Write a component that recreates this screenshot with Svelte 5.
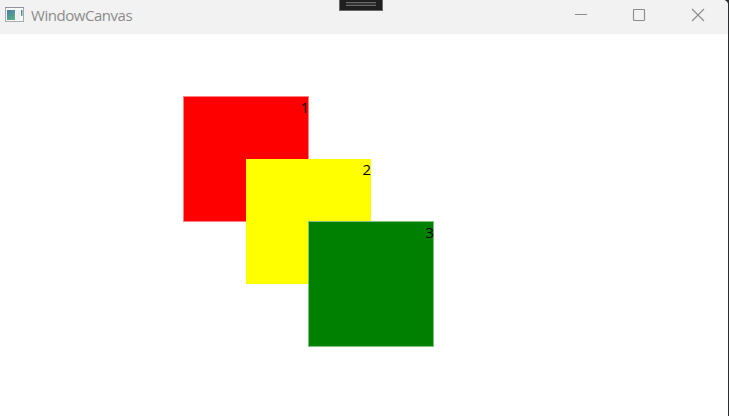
<script>
  const squares = [
    { label: '1', x: 183, y: 62, size: 126, fill: '#ff0000', edge: '#ff8080' },
    { label: '2', x: 246, y: 125, size: 125, fill: '#ffff00', edge: '#ffff00' },
    { label: '3', x: 308, y: 187, size: 126, fill: '#008000', edge: '#80c080' }
  ];
</script>

<div class="desktop">
  <div class="window">
    <header class="titlebar">
      <svg class="app-icon" width="20" height="16" viewBox="0 0 20 16">
        <defs>
          <linearGradient id="pane" x1="0" y1="0" x2="0.6" y2="1">
            <stop offset="0" stop-color="#4a7ca8" />
            <stop offset="1" stop-color="#56aa86" />
          </linearGradient>
        </defs>
        <rect x="0.5" y="0.5" width="18" height="14" fill="#f8f8f9" stroke="#a9abb0" />
        <path d="M0 .5H19" stroke="#8f939d" />
        <rect x="2" y="3" width="8" height="10" fill="url(#pane)" />
        <rect x="11" y="3" width="4" height="10" fill="#eeeff1" />
        <rect x="16" y="3" width="1.5" height="6" fill="url(#pane)" />
      </svg>
      <span class="title">WindowCanvas</span>
      <div class="controls">
        <svg width="14" height="14" viewBox="0 0 14 14"><path d="M2 6.5H14" stroke="#8c8c8c" /></svg>
        <svg width="14" height="14" viewBox="0 0 14 14"><rect x="1.5" y="1.5" width="11" height="11" rx="0.8" fill="none" stroke="#8c8c8c" stroke-width="1.15" /></svg>
        <svg width="14" height="14" viewBox="0 0 14 14"><path d="M1 1L13 13M13 1L1 13" stroke="#8c8c8c" stroke-width="1.1" /></svg>
      </div>
    </header>
    <main class="canvas">
      {#each squares as s}
        <div class="square" style="left:{s.x}px;top:{s.y}px;width:{s.size}px;height:{s.size}px;background:{s.fill};border-color:{s.edge}">
          <span class:raised={s.size === 125}>{s.label}</span>
        </div>
      {/each}
    </main>
  </div>
  <div class="debug-handle"><i></i></div>
</div>

<style>
  .desktop {
    position: relative;
    width: 729px;
    height: 416px;
    overflow: hidden;
    background: #2b2d2e;
    font-family: "Open Sans", "Noto Sans", sans-serif;
  }
  .window {
    display: flex;
    flex-direction: column;
    width: 728px;
    height: 416px;
    overflow: hidden;
    border-top-right-radius: 5px;
    background: #fff;
  }
  .titlebar {
    display: flex;
    align-items: flex-start;
    height: 34px;
    flex: none;
    background: #f2f2f2;
  }
  .app-icon {
    margin: 7px 0 0 5px;
    flex: none;
  }
  .title {
    margin: 5px 0 0 6px;
    font-size: 15px;
    line-height: 20px;
    letter-spacing: -0.46px;
    color: #8c8c8c;
  }
  .controls {
    display: flex;
    gap: 45px;
    margin: 8px 23px 0 auto;
  }
  .controls svg {
    overflow: visible;
  }
  .canvas {
    position: relative;
    flex: 1;
  }
  .square {
    position: absolute;
    box-sizing: border-box;
    border: 1px solid;
    text-align: right;
    font-size: 15px;
    line-height: 20px;
    color: #000;
  }
  .square span {
    display: block;
    margin-right: -1px;
  }
  .square .raised {
    margin-top: -1px;
  }
  .debug-handle {
    position: absolute;
    left: 339px;
    top: 0;
    width: 44px;
    height: 11px;
    box-sizing: border-box;
    border: 1px solid #6a6a6a;
    border-top: 0;
    background: #1f1f1f;
    display: flex;
    justify-content: center;
  }
  .debug-handle i {
    width: 30px;
    height: 4px;
    margin-top: 2px;
    box-sizing: border-box;
    border-top: 1px solid #686868;
    border-bottom: 1px solid #686868;
    background: #333;
  }
</style>
